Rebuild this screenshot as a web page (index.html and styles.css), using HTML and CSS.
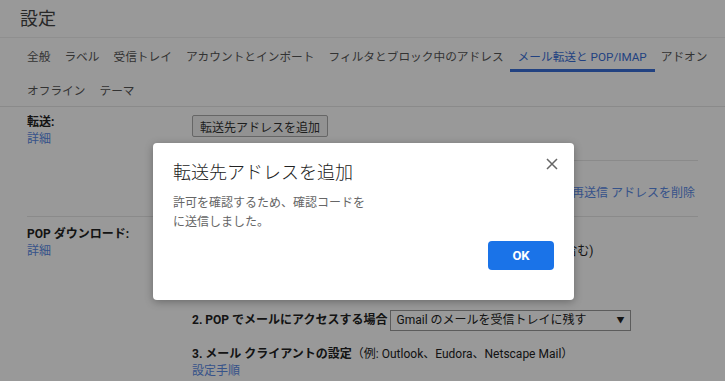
FILE: index.html
```html
<!DOCTYPE html>
<html lang="ja">
<head>
  <meta charset="UTF-8" />
  <title>設定 - メール転送と POP/IMAP</title>
  <link rel="stylesheet" href="styles.css">
</head>
<body>
  <div class="page">
    <h1 class="page-title">設定</h1>

    <nav class="tabs">
      <div class="tab-row">
        <span class="tab">全般</span>
        <span class="tab">ラベル</span>
        <span class="tab">受信トレイ</span>
        <span class="tab">アカウントとインポート</span>
        <span class="tab">フィルタとブロック中のアドレス</span>
        <span class="tab active">メール転送と POP/IMAP</span>
        <span class="tab">アドオン</span>
      </div>
      <div class="tab-row">
        <span class="tab">オフライン</span>
        <span class="tab">テーマ</span>
      </div>
    </nav>

    <section class="setting setting-forward">
      <div class="setting-label">
        <b>転送:</b>
        <a class="link">詳細</a>
      </div>
      <div class="setting-body">
        <button class="plain-btn">転送先アドレスを追加</button>
        <hr class="inner-rule">
        <div class="pending">
          <span>確認コードを</span><a class="link">再送信</a>&nbsp;<a class="link">アドレスを削除</a>
        </div>
      </div>
    </section>

    <section class="setting setting-pop">
      <div class="setting-label">
        <b>POP ダウンロード:</b>
        <a class="link">詳細</a>
      </div>
      <div class="setting-body">
        <p class="line"><b>1. ステータス: POP 無効</b></p>
        <p class="line option">○ すべてのメールで POP を有効にする（ダウンロード済みメールを含む)</p>
        <p class="line option">○ 今後受信するメールで POP を有効にする</p>
        <p class="line option">● POP を無効にする</p>
        <div class="pop-access">
          <b>2. POP でメールにアクセスする場合</b>
          <div class="select">
            <span>Gmail のメールを受信トレイに残す</span>
            <span class="caret">▼</span>
          </div>
        </div>
        <p class="line client"><b>3. メール クライアントの設定</b>（例: Outlook、Eudora、Netscape Mail）</p>
        <a class="link">設定手順</a>
      </div>
    </section>
  </div>

  <div class="overlay"></div>

  <div class="dialog">
    <button class="dialog-close" aria-label="閉じる">
      <svg width="12" height="12" viewBox="0 0 12 12"><path d="M1 1L11 11M11 1L1 11" stroke="#666" stroke-width="1.5"/></svg>
    </button>
    <h2 class="dialog-title">転送先アドレスを追加</h2>
    <p class="dialog-text">許可を確認するため、確認コードを<br>に送信しました。</p>
    <div class="dialog-actions">
      <button class="ok-btn">OK</button>
    </div>
  </div>
</body>
</html>
```

FILE: styles.css
```css
* {
  box-sizing: border-box;
  margin: 0;
  padding: 0;
}

body {
  background: #fff;
  color: #222;
  font-family: Roboto, "Noto Sans CJK JP", sans-serif;
  font-size: 12px;
  width: 725px;
  height: 381px;
  overflow: hidden;
  position: relative;
}

.page-title {
  font-size: 18px;
  font-weight: 400;
  color: #444;
  height: 38px;
  line-height: 38px;
  padding-left: 20px;
  border-bottom: 1px solid #eee;
}

.tabs {
  padding: 0 20px;
  border-bottom: 1px solid #e6e6e6;
}

.tab-row {
  display: flex;
  height: 34px;
  align-items: stretch;
  white-space: nowrap;
}

.tab {
  display: flex;
  align-items: center;
  padding: 0 7px;
  color: #555;
  font-size: 11.7px;
}

.tab.active {
  color: #3a6fd8;
  box-shadow: inset 0 -3px 0 #3a6fd8;
  padding: 0 8px;
  margin: 0 -1px 0 -1px;
}

.setting {
  display: flex;
  margin: 0 27px;
}

.setting-forward {
  padding-top: 7px;
  height: 110px;
  border-bottom: 1px solid #e6e6e6;
}

.setting-pop {
  padding-top: 9px;
}

.setting-label {
  width: 165px;
  flex-shrink: 0;
  display: flex;
  flex-direction: column;
  line-height: 17px;
}

.setting-label b {
  font-weight: 700;
}

.link {
  color: #5a8ae6;
  cursor: pointer;
}

.setting-body {
  flex: 1;
  line-height: 17px;
}

.plain-btn {
  font-family: inherit;
  font-size: 12px;
  color: #333;
  background: #f3f3f3;
  border: 1px solid #aaa;
  border-radius: 2px;
  height: 22px;
  padding: 0 7px;
  margin-top: 1px;
}

.inner-rule {
  border: none;
  border-top: 1px solid #e6e6e6;
  margin-top: 23px;
}

.pending {
  display: flex;
  justify-content: flex-end;
  margin-top: 24px;
  padding-right: 3px;
  color: #333;
}

.line {
  height: 17px;
  white-space: nowrap;
}

.option {
  padding-left: 6px;
}

.pop-access {
  display: flex;
  align-items: center;
  margin-top: 16px;
  height: 20px;
}

.select {
  display: flex;
  justify-content: space-between;
  align-items: center;
  width: 241px;
  height: 21px;
  margin-left: 3px;
  padding: 0 6px 0 5px;
  border: 1px solid #999;
  background: #fff;
  color: #222;
}

.caret {
  font-size: 8px;
}

.client {
  margin-top: 16px;
}

.overlay {
  position: absolute;
  inset: 0;
  background: rgba(0, 0, 0, 0.4);
}

.dialog {
  position: absolute;
  left: 153px;
  top: 143px;
  width: 421px;
  height: 157px;
  background: #fff;
  border-radius: 4px;
  box-shadow: 0 2px 8px rgba(0, 0, 0, 0.3);
  padding: 18px 20px 20px;
  font-family: Roboto, "Noto Sans CJK JP", sans-serif;
}

.dialog-close {
  position: absolute;
  top: 15px;
  right: 16px;
  width: 12px;
  height: 12px;
  border: none;
  background: none;
  display: flex;
}

.dialog-title {
  font-size: 18px;
  font-weight: 300;
  color: #222;
  line-height: 24px;
}

.dialog-text {
  margin-top: 9px;
  font-size: 12px;
  line-height: 19px;
  color: #666;
}

.dialog-actions {
  display: flex;
  justify-content: flex-end;
  margin-top: 9px;
}

.ok-btn {
  width: 66px;
  height: 29px;
  border: none;
  border-radius: 4px;
  background: #1a73e8;
  color: #fff;
  font-family: Roboto, sans-serif;
  font-weight: 700;
  font-size: 13px;
}
```
